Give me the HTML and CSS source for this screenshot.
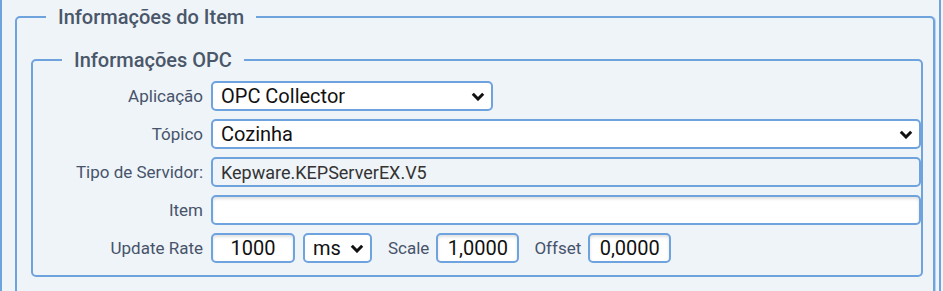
FILE: index.html
```html
<!DOCTYPE html>
<html lang="pt-BR">
<head>
    <meta charset="UTF-8">
    <meta name="viewport" content="width=device-width, initial-scale=1.0">
    <title>Informações do Item</title>
    <link rel="stylesheet" href="styles.css">
</head>
<body>
    <div class="panel">
        <fieldset class="group">
            <legend>Informações do Item</legend>

            <fieldset class="group inner">
                <legend>Informações OPC</legend>

                <div class="form-grid">
                    <label for="app">Aplicação</label>
                    <div class="select-wrap short">
                        <select id="app">
                            <option>OPC Collector</option>
                        </select>
                        <svg class="chevron" viewBox="0 0 14 9"><path d="M1.8 1.8 L7 7 L12.2 1.8" /></svg>
                    </div>

                    <label for="topic">Tópico</label>
                    <div class="select-wrap">
                        <select id="topic">
                            <option>Cozinha</option>
                        </select>
                        <svg class="chevron" viewBox="0 0 14 9"><path d="M1.8 1.8 L7 7 L12.2 1.8" /></svg>
                    </div>

                    <label for="server">Tipo de Servidor:</label>
                    <input type="text" id="server" class="readonly" value="Kepware.KEPServerEX.V5" readonly>

                    <label for="item">Item</label>
                    <input type="text" id="item" value="">

                    <label for="rate">Update Rate</label>
                    <div class="rate-row">
                        <input type="text" id="rate" class="num rate" value="1000">
                        <div class="select-wrap unit">
                            <select id="unit">
                                <option>ms</option>
                            </select>
                            <svg class="chevron" viewBox="0 0 14 9"><path d="M1.8 1.8 L7 7 L12.2 1.8" /></svg>
                        </div>
                        <label for="scale" class="inline-label scale-label">Scale</label>
                        <input type="text" id="scale" class="num" value="1,0000">
                        <label for="offset" class="inline-label offset-label">Offset</label>
                        <input type="text" id="offset" class="num" value="0,0000">
                    </div>
                </div>
            </fieldset>
        </fieldset>
    </div>
</body>
</html>
```

FILE: styles.css
```css
body {
    margin: 0;
    background-color: #eff4f9;
    font-family: Roboto, "Liberation Sans", Arial, sans-serif;
    color: #48566a;
}
.panel {
    width: 941px;
    height: 291px;
    border-left: 2px solid #6ea3dd;
    border-right: 2px solid #6ea3dd;
    padding: 5px 4px 0 13px;
    box-sizing: border-box;
    overflow: hidden;
}
.group {
    margin: 0;
    border: 2px solid #6ea3dd;
    border-radius: 5px;
    padding: 19px 10px 60px 14px;
    min-width: 0;
    box-shadow: 1px 0 0 #b9d3ef;
}
.group legend {
    margin-left: 15px;
    padding: 0 12px;
    font-size: 20px;
    font-weight: 500;
    color: #4a5769;
    line-height: 24px;
}
.inner {
    padding: 9px 0 12px 0;
    box-shadow: none;
}
.inner legend {
    margin-left: 29px;
}
.form-grid {
    display: grid;
    grid-template-columns: 170px 1fr;
    column-gap: 8px;
    row-gap: 8px;
    align-items: center;
}
.form-grid > label {
    text-align: right;
    font-size: 17px;
    line-height: 20px;
    color: #46536a;
}
input, select {
    height: 30px;
    border: 2px solid #6ea3dd;
    border-radius: 5px;
    background: #fff;
    font-family: Roboto, "Liberation Sans", Arial, sans-serif;
    font-size: 20px;
    color: #111;
    box-sizing: border-box;
    padding: 0 8px;
    margin: 0;
    outline: none;
}
input {
    width: 100%;
    box-shadow: inset 0 2px 3px rgba(0, 0, 0, 0.12);
}
input.readonly {
    background: #eff4f9;
    box-shadow: none;
    font-size: 18px;
    color: #333;
}
.select-wrap {
    position: relative;
    height: 30px;
}
.select-wrap select {
    width: 100%;
    appearance: none;
    -webkit-appearance: none;
}
.select-wrap.short {
    width: 282px;
}
.chevron {
    position: absolute;
    right: 8px;
    top: 11px;
    width: 14px;
    height: 9px;
    fill: none;
    stroke: #111;
    stroke-width: 3;
    pointer-events: none;
}
.rate-row {
    display: flex;
    align-items: center;
}
.rate-row .num {
    width: 83px;
    padding: 0 4px;
    text-align: center;
}
.rate-row .num.rate {
    width: 84px;
}
.select-wrap.unit {
    width: 69px;
    margin-left: 8px;
}
.inline-label {
    font-size: 17px;
    color: #46536a;
}
.scale-label {
    margin: 0 7px 0 16px;
}
.offset-label {
    margin: 0 7px 0 15px;
}
```
